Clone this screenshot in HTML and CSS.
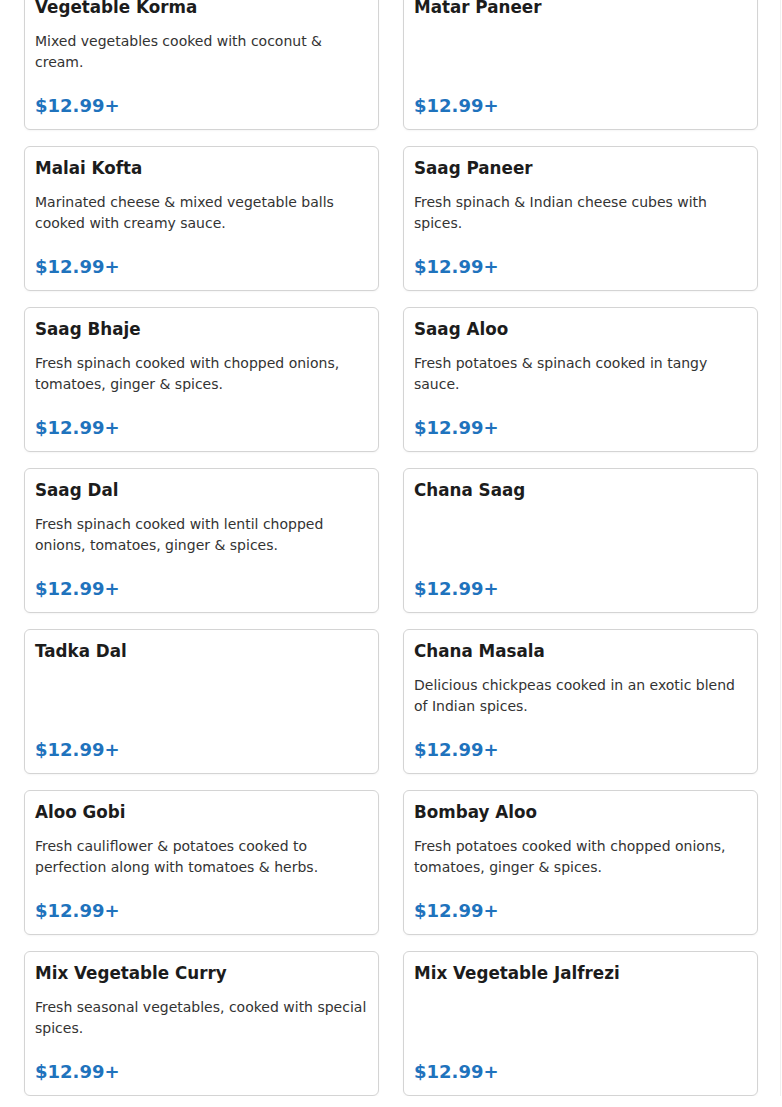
FILE: index.html
```html
<!DOCTYPE html>
<html lang="en">
<head>
<meta charset="utf-8">
<title>Vegetarian Dishes</title>
<link rel="stylesheet" href="styles.css">
</head>
<body>
<div class="page">
  <div class="menu-grid">
    <div class="card"><h3 class="title">Vegetable Korma</h3><p class="desc">Mixed vegetables cooked with coconut &amp; cream.</p><div class="price">$12.99+</div></div>
    <div class="card"><h3 class="title">Matar Paneer</h3><div class="price">$12.99+</div></div>
    <div class="card"><h3 class="title">Malai Kofta</h3><p class="desc">Marinated cheese &amp; mixed vegetable balls cooked with creamy sauce.</p><div class="price">$12.99+</div></div>
    <div class="card"><h3 class="title">Saag Paneer</h3><p class="desc">Fresh spinach &amp; Indian cheese cubes with spices.</p><div class="price">$12.99+</div></div>
    <div class="card"><h3 class="title">Saag Bhaje</h3><p class="desc">Fresh spinach cooked with chopped onions, tomatoes, ginger &amp; spices.</p><div class="price">$12.99+</div></div>
    <div class="card"><h3 class="title">Saag Aloo</h3><p class="desc">Fresh potatoes &amp; spinach cooked in tangy sauce.</p><div class="price">$12.99+</div></div>
    <div class="card"><h3 class="title">Saag Dal</h3><p class="desc">Fresh spinach cooked with lentil chopped onions, tomatoes, ginger &amp; spices.</p><div class="price">$12.99+</div></div>
    <div class="card"><h3 class="title">Chana Saag</h3><div class="price">$12.99+</div></div>
    <div class="card"><h3 class="title">Tadka Dal</h3><div class="price">$12.99+</div></div>
    <div class="card"><h3 class="title">Chana Masala</h3><p class="desc">Delicious chickpeas cooked in an exotic blend of Indian spices.</p><div class="price">$12.99+</div></div>
    <div class="card"><h3 class="title">Aloo Gobi</h3><p class="desc">Fresh cauliflower &amp; potatoes cooked to perfection along with tomatoes &amp; herbs.</p><div class="price">$12.99+</div></div>
    <div class="card"><h3 class="title">Bombay Aloo</h3><p class="desc">Fresh potatoes cooked with chopped onions, tomatoes, ginger &amp; spices.</p><div class="price">$12.99+</div></div>
    <div class="card"><h3 class="title">Mix Vegetable Curry</h3><p class="desc">Fresh seasonal vegetables, cooked with special spices.</p><div class="price">$12.99+</div></div>
    <div class="card"><h3 class="title">Mix Vegetable Jalfrezi</h3><div class="price">$12.99+</div></div>
  </div>
</div>
</body>
</html>
```

FILE: styles.css
```css
html, body {
  margin: 0;
  padding: 0;
  background: #ffffff;
}

body {
  font-family: "DejaVu Sans", Verdana, sans-serif;
  color: #222;
  overflow: hidden;
}

.page {
  width: 781px;
  border-right: 1px solid #f0f0f0;
  min-height: 1107px;
  box-sizing: border-box;
}

.menu-grid {
  display: grid;
  grid-template-columns: 355px 355px;
  column-gap: 24px;
  row-gap: 16px;
  padding: 0 24px;
  margin-top: -15px;
}

.card {
  display: flex;
  flex-direction: column;
  border: 1px solid #d4d4d4;
  border-radius: 6px;
  padding: 11px 10px 12px;
  background: #fff;
  box-shadow: 0 1px 2px rgba(0, 0, 0, 0.04);
}

.title {
  margin: 0 0 14px;
  font-size: 16.75px;
  line-height: 20px;
  font-weight: bold;
  color: #1c1c1c;
}

.desc {
  margin: 0;
  font-size: 14px;
  line-height: 21px;
  color: #333;
  min-height: 42px;
}

.price {
  margin-top: auto;
  padding-top: 22px;
  font-size: 18px;
  line-height: 22px;
  font-weight: bold;
  color: #1f73bd;
}
```
